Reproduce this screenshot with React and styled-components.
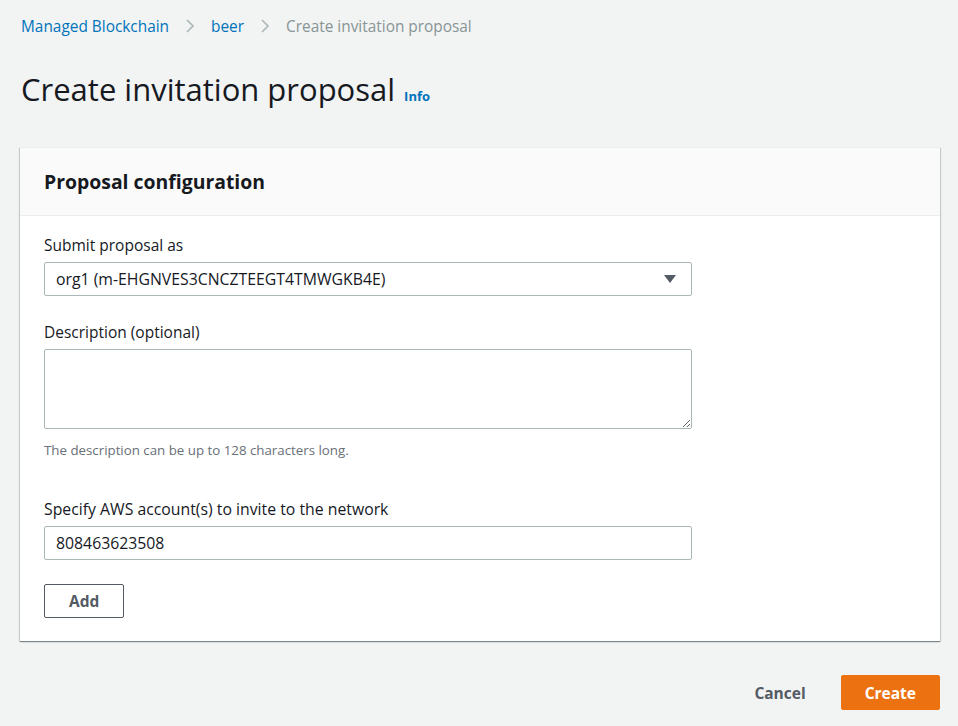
import React from 'react';
import styled, { createGlobalStyle } from 'styled-components';

const GlobalStyle = createGlobalStyle`
  html, body {
    margin: 0;
    padding: 0;
    background: #f2f3f3;
    font-family: "Open Sans", "Noto Sans", Arial, sans-serif;
    color: #16191f;
  }
  * { box-sizing: border-box; }
`;

const Page = styled.div`
  width: 958px;
  min-height: 726px;
  padding: 14px 18px 0 20px;
`;

const Breadcrumbs = styled.nav`
  display: flex;
  align-items: center;
  gap: 16px;
  font-size: 15.4px;
  height: 24px;
  padding-left: 1px;
`;

const Crumb = styled.a`
  color: ${props => (props.current ? '#879596' : '#0073bb')};
  text-decoration: none;
`;

const Chevron = () => (
  <svg width="10" height="16" viewBox="0 0 10 16">
    <path d="M2 2l6 6-6 6" fill="none" stroke="#aab7b8" strokeWidth="1.6" />
  </svg>
);

const TitleRow = styled.div`
  display: flex;
  align-items: baseline;
  gap: 9px;
  margin-top: 30px;
  padding-left: 1px;
`;

const Title = styled.h1`
  margin: 0;
  font-size: 31px;
  font-weight: 400;
  color: #16191f;
`;

const InfoLink = styled.a`
  color: #0073bb;
  font-size: 13px;
  font-weight: 700;
  text-decoration: none;
`;

const Panel = styled.section`
  margin-top: 37px;
  width: 920px;
  background: #fff;
  border-top: 1px solid #eaeded;
  box-shadow: 0 1px 1px 0 rgba(0, 28, 36, 0.3), 1px 1px 1px 0 rgba(0, 28, 36, 0.15),
    -1px 1px 1px 0 rgba(0, 28, 36, 0.15);
`;

const PanelHeader = styled.header`
  height: 68px;
  display: flex;
  align-items: center;
  padding: 0 24px;
  background: #fafafa;
  border-bottom: 1px solid #eaeded;
`;

const PanelTitle = styled.h2`
  margin: 0;
  font-size: 19.4px;
  font-weight: 700;
`;

const PanelBody = styled.div`
  padding: 18px 24px 23px;
  display: flex;
  flex-direction: column;
`;

const Field = styled.div`
  display: flex;
  flex-direction: column;
  margin-bottom: ${props => props.gap || 24}px;
`;

const Label = styled.label`
  font-size: ${props => props.size || 15.5}px;
  line-height: 22px;
  margin-bottom: 6px;
  color: #16191f;
`;

const SelectBox = styled.div`
  width: 648px;
  height: 34px;
  border: 1px solid #aab7b8;
  border-radius: 2px;
  display: flex;
  align-items: center;
  justify-content: space-between;
  padding: 0 14px 0 11px;
  font-size: 15.8px;
`;

const Caret = () => (
  <svg width="14" height="10" viewBox="0 0 14 10">
    <path d="M1 1h12L7 9z" fill="#545b64" />
  </svg>
);

const TextArea = styled.textarea`
  width: 648px;
  height: 80px;
  border: 1px solid #aab7b8;
  border-radius: 2px;
  font-family: inherit;
  font-size: 15px;
  padding: 6px 12px;
`;

const Hint = styled.div`
  font-size: 13.3px;
  color: #687078;
  margin-top: 12px;
`;

const TextInput = styled.input`
  width: 648px;
  height: 34px;
  border: 1px solid #aab7b8;
  border-radius: 2px;
  font-family: inherit;
  font-size: 15.8px;
  padding: 0 11px;
  color: #16191f;
`;

const Button = styled.button`
  font-family: inherit;
  font-size: 15.5px;
  font-weight: 700;
  height: ${props => (props.primary ? 35 : 34)}px;
  border-radius: 2px;
  cursor: pointer;
  background: ${props => (props.primary ? '#ec7211' : props.link ? 'transparent' : '#fff')};
  color: ${props => (props.primary ? '#fff' : '#545b64')};
  border: 1px solid ${props => (props.primary ? '#ec7211' : props.link ? 'transparent' : '#545b64')};
  padding: 0 ${props => (props.primary ? 23 : props.link ? 22 : 24)}px;
`;

const Actions = styled.div`
  display: flex;
  justify-content: flex-end;
  align-items: center;
  gap: 12px;
  width: 920px;
  margin-top: 34px;
`;

export default function App() {
  return (
    <>
      <GlobalStyle />
      <Page>
        <Breadcrumbs>
          <Crumb href="#">Managed Blockchain</Crumb>
          <Chevron />
          <Crumb href="#">beer</Crumb>
          <Chevron />
          <Crumb current>Create invitation proposal</Crumb>
        </Breadcrumbs>

        <TitleRow>
          <Title>Create invitation proposal</Title>
          <InfoLink href="#">Info</InfoLink>
        </TitleRow>

        <Panel>
          <PanelHeader>
            <PanelTitle>Proposal configuration</PanelTitle>
          </PanelHeader>
          <PanelBody>
            <Field gap={25}>
              <Label>Submit proposal as</Label>
              <SelectBox>
                <span>org1 (m-EHGNVES3CNCZTEEGT4TMWGKB4E)</span>
                <Caret />
              </SelectBox>
            </Field>
            <Field gap={39}>
              <Label>Description (optional)</Label>
              <TextArea />
              <Hint>The description can be up to 128 characters long.</Hint>
            </Field>
            <Field>
              <Label size={15.8}>Specify AWS account(s) to invite to the network</Label>
              <TextInput defaultValue="808463623508" />
            </Field>
            <div>
              <Button>Add</Button>
            </div>
          </PanelBody>
        </Panel>

        <Actions>
          <Button link>Cancel</Button>
          <Button primary>Create</Button>
        </Actions>
      </Page>
    </>
  );
}
